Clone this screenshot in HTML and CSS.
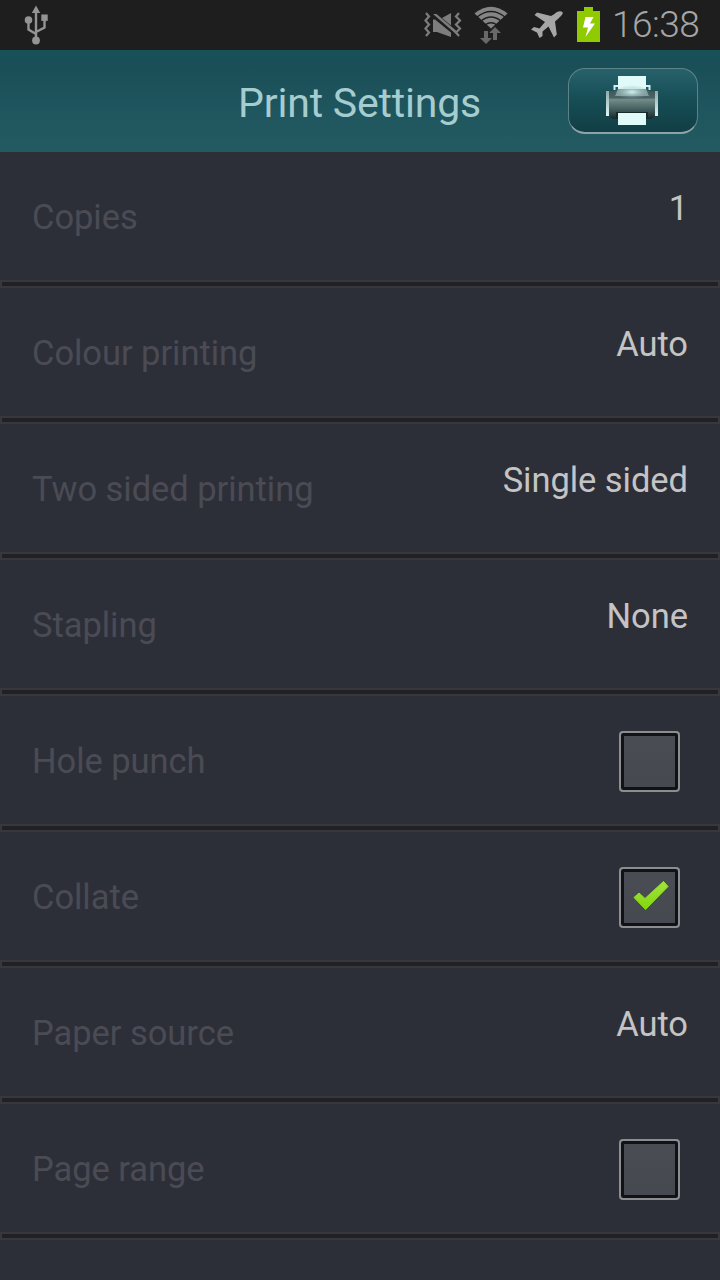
FILE: index.html
```html
<!DOCTYPE html>
<html lang="en">
<head>
<meta charset="utf-8">
<title>Print Settings</title>
<link rel="stylesheet" href="styles.css">
</head>
<body>
<div class="status">
  <svg class="usb" width="28" height="40" viewBox="0 0 28 40" fill="none" stroke="#949494" stroke-width="2.4">
    <path d="M14 6V36M14 30L6.500 25.500V16M14 28L22.500 23.500V14"/>
    <g fill="#949494" stroke="none"><path d="M14 1.500L18.200 9H9.800Z"/><circle cx="6.500" cy="16" r="3.800"/><path d="M19.300 10.500h6.400v6.400h-6.400z"/><circle cx="14" cy="36.500" r="3.900"/></g>
  </svg>
  <svg class="mute" width="40" height="28" viewBox="0 0 40 28" fill="#7d7d7d">
    <path d="M9 9.500V22H13L27 27V22.500L11 9.500Z"/><path d="M27 3V15.500L18 8ZM9 4H12.500L32 20.500V24Z"/>
    <path d="M2 3L5 6.500L1.500 10.500L5 14.500L1.500 18.500L5 22.500L2 26M35 3L32 6.500L36 10.500L32 14.500L36 18.500L32 22.500L35 26" fill="none" stroke="#7d7d7d" stroke-width="2.200"/>
  </svg>
  <svg class="wifi" width="34" height="40" viewBox="0 0 34 40">
    <path d="M.5 7.500Q17 -6 33.500 7.500L17 22.500Z" fill="#858585"/>
    <path d="M3 11Q17 0 31 11M7 15Q17 7 27 15M11 19Q17 14.500 23 19" fill="none" stroke="#1e1e1e" stroke-width="1.300"/>
    <path d="M10 25h4v7h4L12 38L6 32h4zM19 34v-7h-4L21 21l6 6h-4v7z" fill="#686868"/>
  </svg>
  <svg class="plane" width="34" height="30" viewBox="0 0 34 30">
    <path d="M32.500 2C30 .5 27 1.500 24.500 4L21 6L7 2.500L4.500 5L15 12L9.500 18.500L4 17L1 19.500L7 22.500L9.500 28L12.500 26V21.500L18.500 16.500L24 27.500L26.800 24.500L25 11.500L28.500 8.500C31 6 33.500 4 32.500 2Z" fill="#a6a6a6"/>
  </svg>
  <svg class="battery" width="23" height="35" viewBox="0 0 23 35">
    <path d="M7 0h9v4h7v31H0V4h7z" fill="#90ca00"/><path d="M8.500 10H16.500L13 16.500H18L8.500 30L11 20.500H6Z" fill="#fff"/>
  </svg>
  <span class="clock">16:38</span>
</div>
<header class="bar">
  <h1 class="title">Print Settings</h1>
  <button class="print" aria-label="Print">
    <svg width="54" height="52" viewBox="0 0 54 52">
      <defs>
        <linearGradient id="body" x1="0" y1="0" x2="0" y2="1"><stop offset="0" stop-color="#41585a"/><stop offset=".25" stop-color="#4c6466"/><stop offset=".3" stop-color="#738b8b"/><stop offset=".65" stop-color="#445f60"/><stop offset="1" stop-color="#18282a"/></linearGradient>
        <linearGradient id="side" x1="0" y1="0" x2="0" y2="1"><stop offset="0" stop-color="#8ea9aa"/><stop offset="1" stop-color="#e0f5f6"/></linearGradient>
        <radialGradient id="glow"><stop offset="0" stop-color="#d3f4f4"/><stop offset="1" stop-color="#8da7a7" stop-opacity="0"/></radialGradient>
      </defs>
      <path d="M9.500 15v-4h35v4" fill="none" stroke="#d8eeee" stroke-width="2"/>
      <path d="M2 16H52V40L46 44H8L2 40Z" fill="url(#body)"/>
      <path d="M13 14H41L44 21H10Z" fill="#7e9c9d"/>
      <path d="M13 1H41V14H13Z" fill="#e0fafa"/>
      <ellipse cx="27" cy="17" rx="18" ry="7" fill="url(#glow)"/>
      <path d="M1 16h3v25H1zM50 16h3v25h-3z" fill="url(#side)"/>
      <path d="M11 37H43V43H11Z" fill="#162a2c"/>
      <path d="M13 38H41V50H13Z" fill="#e0fafa"/>
    </svg>
  </button>
</header>
<main class="list">
  <div class="row"><span class="label">Copies</span><span class="value">1</span></div>
  <div class="row"><span class="label">Colour printing</span><span class="value">Auto</span></div>
  <div class="row"><span class="label">Two sided printing</span><span class="value">Single sided</span></div>
  <div class="row"><span class="label">Stapling</span><span class="value">None</span></div>
  <div class="row"><span class="label">Hole punch</span><span class="check"></span></div>
  <div class="row"><span class="label">Collate</span><span class="check"><svg class="tick" width="38" height="32" viewBox="0 0 38 32"><defs><linearGradient id="green" x1="0" y1="0" x2="0" y2="1"><stop offset="0" stop-color="#a0e43a"/><stop offset="1" stop-color="#82d60e"/></linearGradient></defs><path d="M2 17.500L7 13L13 18.500L31.500 1.500L36 6.500L13.500 29.500Z" fill="url(#green)" stroke="url(#green)" stroke-width="1" stroke-linejoin="round"/></svg></span></div>
  <div class="row"><span class="label">Paper source</span><span class="value">Auto</span></div>
  <div class="row"><span class="label">Page range</span><span class="check"></span></div>
</main>
</body>
</html>
```
FILE: styles.css
```css
* { box-sizing: border-box; }
body {
  margin: 0;
  width: 720px;
  height: 1280px;
  overflow: hidden;
  background: #2d2f38;
  font-family: Roboto, "Noto Sans", sans-serif;
}
.status {
  display: flex;
  align-items: flex-start;
  height: 50px;
  padding-left: 22px;
  background: #1e1e1e;
}
.status svg { flex: none; overflow: visible; }
.usb { margin-top: 4px; }
.mute { margin: 10px 0 0 374px; }
.wifi { margin: 6px 0 0 10px; }
.plane { margin: 10px 0 0 22px; }
.battery { margin: 7px 0 0 13px; }
.clock {
  margin: 3px 0 0 12px;
  font-size: 37px;
  font-weight: 350;
  line-height: 44px;
  letter-spacing: -.5px;
  color: #a6a6a6;
  white-space: nowrap;
}
.bar {
  display: grid;
  grid-template-columns: 416px 130px;
  padding-left: 152px;
  align-items: center;
  height: 102px;
  background: linear-gradient(#185158 0, #1a4f58 16%, #245b63 100%);
}
.title {
  margin: 4px 1px 0 0;
  text-align: center;
  font-size: 41px;
  font-weight: 400;
  line-height: 48px;
  letter-spacing: -.2px;
  color: #a5cdd0;
}
.print {
  display: flex;
  justify-content: center;
  width: 130px;
  height: 66px;
  padding: 6px 2px 0 0;
  border: 1px solid #5d8389;
  border-bottom: 2px solid #8da5aa;
  border-radius: 17px;
  background: linear-gradient(#27616a, #164d55 50%, #123e45);
}
.row {
  display: flex;
  justify-content: space-between;
  align-items: center;
  height: 136px;
  padding: 0 32px 4px;
  background:
    linear-gradient(#212125, #212125) 2px 130px / 716px 4px no-repeat,
    linear-gradient(#37373d, #37373d) 0 128px / 720px 8px no-repeat;
}
.label, .value { font-size: 34.5px; line-height: 44px; letter-spacing: -.05px; white-space: nowrap; }
.label { margin-bottom: 2px; color: #4a4b54; }
.value { margin-bottom: 20px; color: #c4c4c4; }
.check {
  display: flex;
  align-items: center;
  justify-content: center;
  width: 61px;
  height: 61px;
  margin: 0 8px 1px 0;
  border: 2px solid #8c8d91;
  border-radius: 4px;
  background: linear-gradient(#4b4d54, #46484f);
  box-shadow: inset 0 0 0 3px #111216;
}
.tick { margin: -3px 0 0 3px; }
```
